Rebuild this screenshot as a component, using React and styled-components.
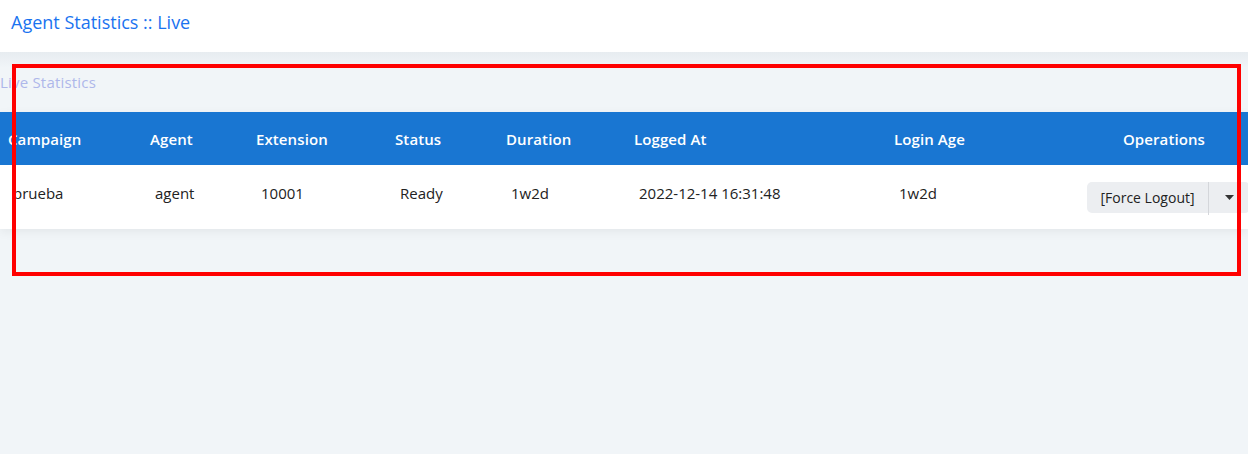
import styled, { createGlobalStyle } from 'styled-components';

const GlobalStyle = createGlobalStyle`
  html, body {
    margin: 0;
    padding: 0;
    background: #f1f5f8;
    font-family: "Open Sans", "Noto Sans", sans-serif;
  }
`;

const columns = '142px 106px 139px 111px 128px 260px 1fr 168px';

const rows = [
    {
        campaign: 'prueba',
        agent: 'agent',
        extension: '10001',
        status: 'Ready',
        duration: '1w2d',
        loggedAt: '2022-12-14 16:31:48',
        loginAge: '1w2d',
    },
];

function App() {
    return (
        <Page>
            <GlobalStyle />
            <TopBar>
                <Title>Agent Statistics :: Live</Title>
            </TopBar>
            <Content>
                <SectionTitle>Live Statistics</SectionTitle>
                <Panel>
                    <HeadRow>
                        <HeadCell>Campaign</HeadCell>
                        <HeadCell>Agent</HeadCell>
                        <HeadCell>Extension</HeadCell>
                        <HeadCell>Status</HeadCell>
                        <HeadCell>Duration</HeadCell>
                        <HeadCell>Logged At</HeadCell>
                        <HeadCell>Login Age</HeadCell>
                        <HeadCell $center>Operations</HeadCell>
                    </HeadRow>
                    {rows.map((row) => (
                        <BodyRow key={row.extension}>
                            <Cell>{row.campaign}</Cell>
                            <Cell>{row.agent}</Cell>
                            <Cell>{row.extension}</Cell>
                            <Cell>{row.status}</Cell>
                            <Cell>{row.duration}</Cell>
                            <Cell>{row.loggedAt}</Cell>
                            <Cell>{row.loginAge}</Cell>
                            <OpsCell>
                                <SplitButton>
                                    <MainAction>[Force Logout]</MainAction>
                                    <Caret>
                                        <svg width="9" height="5" viewBox="0 0 9 5">
                                            <path d="M0 0h9L4.5 5z" fill="#333" />
                                        </svg>
                                    </Caret>
                                </SplitButton>
                            </OpsCell>
                        </BodyRow>
                    ))}
                </Panel>
            </Content>
            <Highlight />
        </Page>
    );
}

export default App;

const Page = styled.div`
  position: relative;
  width: 1248px;
  height: 454px;
  overflow: hidden;
  background: #f1f5f8;
`

const TopBar = styled.div`
  height: 52px;
  box-sizing: border-box;
  background: #fff;
  padding: 10px 0 0 11px;
`

const Title = styled.h1`
  margin: 0;
  font-size: 18px;
  line-height: 24px;
  font-weight: 400;
  color: #1a73f0;
`

const Content = styled.div`
  background: linear-gradient(#e7ecf0 0px, #f1f5f8 16px);
  padding-top: 20px;
`

const SectionTitle = styled.div`
  font-size: 15px;
  color: #aeb7ea;
  letter-spacing: 0.2px;
  height: 40px;
  line-height: 20px;
`

const Panel = styled.div`
  background: #fff;
  box-shadow: 0 3px 10px rgba(0, 0, 0, 0.06);
`

const HeadRow = styled.div`
  display: grid;
  grid-template-columns: ${columns};
  height: 53px;
  align-items: center;
  background: #1976d2;
`

const HeadCell = styled.div`
  padding-left: ${(p) => (p.$center ? '0' : '8px')};
  text-align: ${(p) => (p.$center ? 'center' : 'left')};
  color: #fff;
  font-size: 15px;
  font-weight: 600;
  letter-spacing: 0.1px;
`

const BodyRow = styled.div`
  display: grid;
  grid-template-columns: ${columns};
  height: 64px;
  align-items: center;
`

const Cell = styled.div`
  padding-left: 13px;
  color: #222;
  font-size: 15px;
  padding-bottom: 8px;
`

const OpsCell = styled.div`
  padding-left: 7px;
`

const SplitButton = styled.div`
  display: flex;
  align-items: stretch;
  height: 31px;
  width: 163px;
  background: #eceef1;
  border-radius: 5px;
`

const MainAction = styled.div`
  display: flex;
  align-items: center;
  justify-content: center;
  width: 121px;
  font-size: 14px;
  color: #222;
  border-right: 1px solid #d4d6da;
  margin-bottom: -2px;
  padding-bottom: 2px;
`

const Caret = styled.div`
  flex: 1;
  display: flex;
  align-items: center;
  justify-content: center;
`

const Highlight = styled.div`
  position: absolute;
  left: 12px;
  top: 64px;
  width: 1229px;
  height: 212px;
  box-sizing: border-box;
  border: 4px solid #ff0000;
  pointer-events: none;
`
